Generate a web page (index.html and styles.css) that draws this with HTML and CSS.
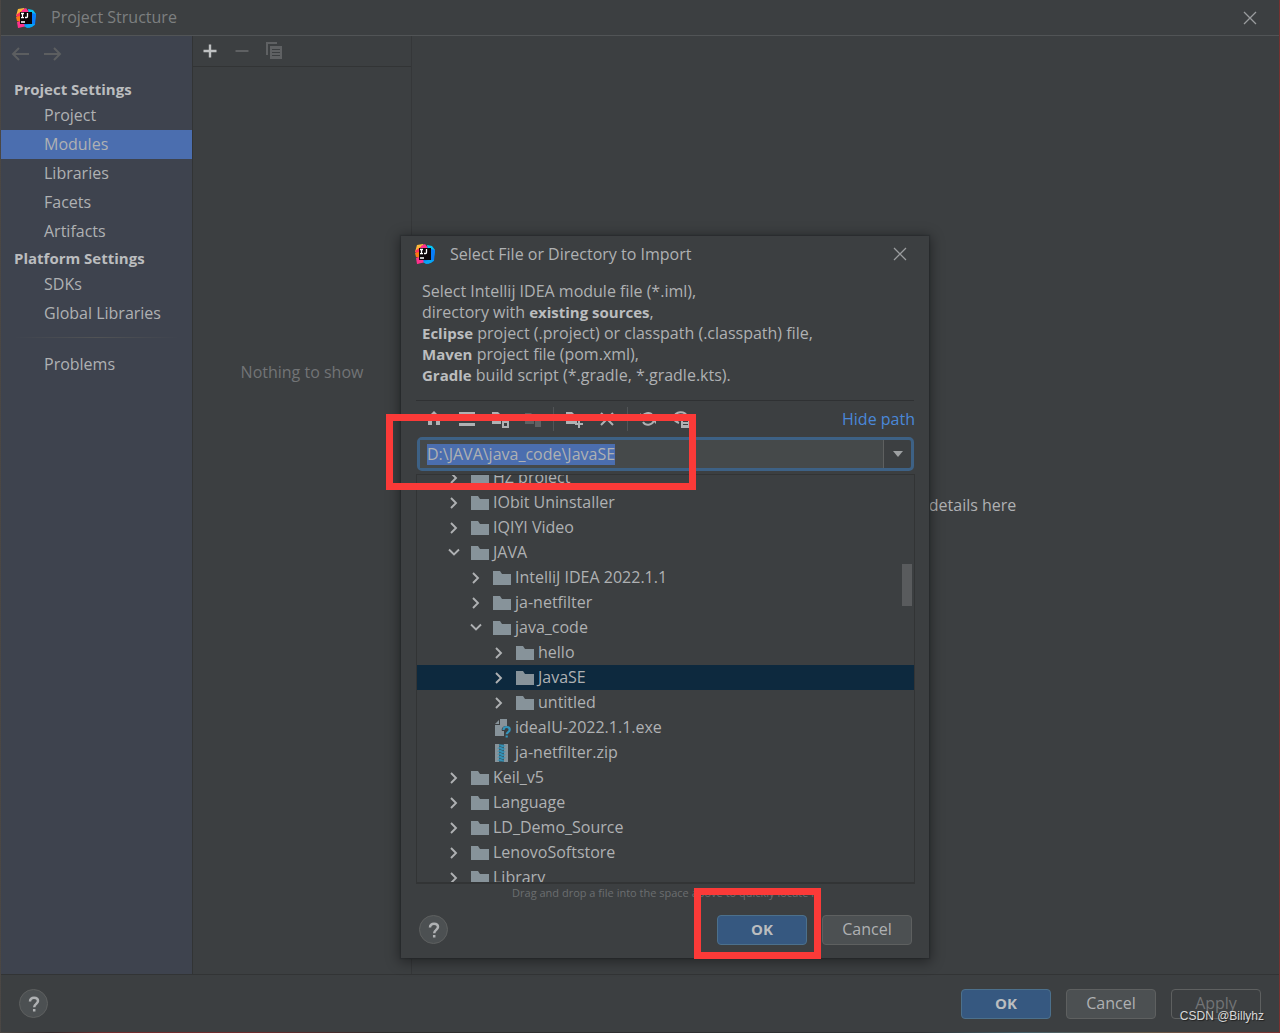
FILE: index.html
```html
<!DOCTYPE html>
<html lang="en">

<head>
    <meta charset="utf-8">
    <title>Project Structure</title>
    <link rel="stylesheet" href="styles.css">
</head>

<body>
    <!-- shared icons -->
    <svg class="sprite" aria-hidden="true">
        <symbol id="logo" viewBox="0 0 20 20">
            <path fill="#fcb93a" d="M2 1l6-1 3 4-5 6-6-2z" />
            <path fill="#fe315d" d="M0 7l7-5 5 3-3 12-7 3 1-7z" />
            <path fill="#f97a12" d="M0 9l4-1 1 6-4-1z" />
            <path fill="#ff318c" d="M6 2l4-2 3 4-7 2zM1 14l4-1 6 5-9 2z" />
            <path fill="#07c3f2" d="M12 1l5 1 3 4-1 6-6-6z" />
            <path fill="#087cfa" d="M16 5l4 1-1 11-6 3-5-3z" />
            <path fill="#07a7f2" d="M13 16l6 0-3 3-5 1-3-2z" />
            <path fill="#0b0508" d="M4 4h12v12H4z" />
            <path fill="none" stroke="#fff" stroke-width="1.3" d="M5 5.500h3M6.500 5.500v4M5 9.600h3M11.500 5v3.500q0 1-1 1H9M5 14h4" />
        </symbol>
        <symbol id="close" viewBox="0 0 14 14">
            <path fill="none" stroke="currentColor" stroke-width="1.300" d="M1 1l12 12M13 1L1 13" />
        </symbol>
        <symbol id="help" viewBox="0 0 14 18">
            <path fill="none" stroke="currentColor" stroke-width="2.500" d="M3 6.500C3 4 4.700 2.800 7 2.800s4 1.200 4 3.300C11 8.800 7.200 9 7.200 12.200M7.200 14v2.500" />
        </symbol>
        <symbol id="folder" viewBox="0 0 18 16">
            <path fill="#87939a" d="M0 1h7l2 3h9v11H0z" />
        </symbol>
        <symbol id="right" viewBox="0 0 16 16">
            <path fill="none" stroke="currentColor" stroke-width="1.900" d="M5 3l5 5-5 5" />
        </symbol>
        <symbol id="down" viewBox="0 0 16 16">
            <path fill="none" stroke="currentColor" stroke-width="1.900" d="M3 4.500l5 5 5-5" />
        </symbol>
        <symbol id="exe" viewBox="0 0 18 20">
            <path fill="#87939a" d="M7 1h7v7c-4 0-6 2-5 5h2v5H2V7h5z" />
            <path fill="#87939a" d="M2 6l4-4v4z" />
            <path fill="none" stroke="#3494ba" stroke-width="2.200" d="M10.500 12c0-2 1.500-3 3.200-3s3 1 3 2.700c0 2.300-3 2.300-3 4.500M13.700 17.500v2" />
        </symbol>
        <symbol id="zip" viewBox="0 0 18 20">
            <path fill="#87939a" d="M2 1h4v18H2zM11 1h4v18h-4z" />
            <path fill="none" stroke="#3494ba" stroke-width="1.200" d="M6 2l5 1-5 2 5 1-5 2 5 1-5 2 5 1-5 2 5 1-5 2 5 1" />
            <path fill="#3494ba" opacity=".4" d="M6 1h5v18H6z" />
        </symbol>
    </svg>

    <div class="window">
        <header class="titlebar">
            <svg class="logo"><use href="#logo" /></svg>
            <h1>Project Structure</h1>
            <button class="close" aria-label="Close"><svg><use href="#close" /></svg></button>
        </header>

        <div class="content">
            <nav class="sidebar">
                <div class="history">
                    <button aria-label="Back"><svg viewBox="0 0 18 14"><path d="M18 7H2M8 1L2 7l6 6" /></svg></button>
                    <button aria-label="Forward"><svg viewBox="0 0 18 14"><path d="M0 7h16M10 1l6 6-6 6" /></svg></button>
                </div>
                <h2>Project Settings</h2>
                <a href="#project">Project</a>
                <a href="#modules" class="active">Modules</a>
                <a href="#libraries">Libraries</a>
                <a href="#facets">Facets</a>
                <a href="#artifacts">Artifacts</a>
                <h2>Platform Settings</h2>
                <a href="#sdks">SDKs</a>
                <a href="#global">Global Libraries</a>
                <hr>
                <a href="#problems">Problems</a>
            </nav>

            <section class="modules">
                <div class="modules-tools">
                    <button aria-label="Add"><svg viewBox="0 0 18 18"><path fill="none" stroke="#bfc1c2" stroke-width="2.400" d="M9 2.500v13M2.500 9h13" /></svg></button>
                    <button aria-label="Remove" disabled><svg viewBox="0 0 18 18"><path fill="none" stroke="#5f6163" stroke-width="2" d="M2.500 9h13" /></svg></button>
                    <button aria-label="Copy" disabled><svg viewBox="0 0 18 18"><path fill="#5f6163" d="M1 0h11v2H3v11H1z" /><path fill="#5f6163" d="M5 4h12v13H5z" /><path stroke="#3c3f41" stroke-width="1.200" d="M7 7.500h8M7 10.500h8M7 13.500h8" /></svg></button>
                </div>
                <p class="empty">Nothing to show</p>
            </section>

            <main class="details">
                <p>Select a module to view or edit its details here</p>
            </main>
        </div>

        <footer class="buttons">
            <button class="help" aria-label="Help"><svg><use href="#help" /></svg></button>
            <button class="btn primary">OK</button>
            <button class="btn">Cancel</button>
            <button class="btn" disabled>Apply</button>
        </footer>
    </div>

    <section class="dialog" role="dialog" aria-labelledby="dialog-title">
        <header class="dialog-title">
            <svg class="logo"><use href="#logo" /></svg>
            <h2 id="dialog-title">Select File or Directory to Import</h2>
            <button class="close" aria-label="Close"><svg><use href="#close" /></svg></button>
        </header>

        <p class="description">
            Select Intellij IDEA module file (*.iml),<br>
            directory with <b>existing sources</b>,<br>
            <b>Eclipse</b> project (.project) or classpath (.classpath) file,<br>
            <b>Maven</b> project file (pom.xml),<br>
            <b>Gradle</b> build script (*.gradle, *.gradle.kts).
        </p>

        <div class="dialog-tools">
            <button aria-label="Home"><svg viewBox="0 0 20 20"><path d="M10 2l8 8h-2v6h-4v-5H8v5H4v-6H2z" /></svg></button>
            <button aria-label="Desktop"><svg viewBox="0 0 20 20"><path d="M2 3h16v3H2zM2 9h16v3H2zM2 14h16v3H2z" /></svg></button>
            <button aria-label="Project directory"><svg viewBox="0 0 20 20"><path d="M2 3h6l2 2h7v5h-6v5H2z" /><path d="M12 11h7v8h-7zm2 3v3h3v-3z" fill-rule="evenodd" /></svg></button>
            <button aria-label="Module directory" disabled><svg viewBox="0 0 20 20"><path d="M2 4h6l2 2h6v4h-5v5H2zM12 11h6v7h-6z" /></svg></button>
            <span class="divider"></span>
            <button aria-label="New folder"><svg viewBox="0 0 20 20"><path d="M2 3h6l2 2h7v5h-4v5H2z" /><path d="M14 11h2v3h3v2h-3v3h-2v-3h-3v-2h3z" /></svg></button>
            <button aria-label="Delete"><svg viewBox="0 0 20 20"><path class="line" d="M4 4l12 12M16 4L4 16" /></svg></button>
            <span class="divider"></span>
            <button aria-label="Refresh"><svg viewBox="0 0 20 20"><path class="line" d="M4 9a6 6 0 0 1 11-2M16 10a6 6 0 0 1-11 3" /><path d="M2 4v6h6zM18 15V9h-6z" /></svg></button>
            <button aria-label="Show hidden files"><svg viewBox="0 0 20 20"><path class="line" d="M8 14C5 13 3 11 2 9c3-7 11-8 15-1" /><path class="line" d="M8 11a2 2 0 0 1 3-4" /><path d="M10 9h9v10h-9zm2 3v1h5v-1zm0 3v1h5v-1z" fill-rule="evenodd" /></svg></button>
            <a href="#path">Hide path</a>
        </div>

        <div class="path-field">
            <input id="path" type="text" aria-label="Path" value="D:\JAVA\java_code\JavaSE" spellcheck="false">
            <button aria-label="Recent paths"><svg viewBox="0 0 12 8"><path fill="#9da0a2" d="M1 1h10L6 7z" /></svg></button>
        </div>

        <div class="tree">
            <ul>
                <li><svg class="arrow"><use href="#right" /></svg><svg class="folder"><use href="#folder" /></svg>HZ project</li>
                <li><svg class="arrow"><use href="#right" /></svg><svg class="folder"><use href="#folder" /></svg>IObit Uninstaller</li>
                <li><svg class="arrow"><use href="#right" /></svg><svg class="folder"><use href="#folder" /></svg>IQIYI Video</li>
                <li><svg class="arrow"><use href="#down" /></svg><svg class="folder"><use href="#folder" /></svg>JAVA</li>
                <li class="level2"><svg class="arrow"><use href="#right" /></svg><svg class="folder"><use href="#folder" /></svg>IntelliJ IDEA 2022.1.1</li>
                <li class="level2"><svg class="arrow"><use href="#right" /></svg><svg class="folder"><use href="#folder" /></svg>ja-netfilter</li>
                <li class="level2"><svg class="arrow"><use href="#down" /></svg><svg class="folder"><use href="#folder" /></svg>java_code</li>
                <li class="level3"><svg class="arrow"><use href="#right" /></svg><svg class="folder"><use href="#folder" /></svg>hello</li>
                <li class="level3 selected"><svg class="arrow"><use href="#right" /></svg><svg class="folder"><use href="#folder" /></svg>JavaSE</li>
                <li class="level3"><svg class="arrow"><use href="#right" /></svg><svg class="folder"><use href="#folder" /></svg>untitled</li>
                <li class="level2"><span class="arrow"></span><svg class="file"><use href="#exe" /></svg>ideaIU-2022.1.1.exe</li>
                <li class="level2"><span class="arrow"></span><svg class="file"><use href="#zip" /></svg>ja-netfilter.zip</li>
                <li><svg class="arrow"><use href="#right" /></svg><svg class="folder"><use href="#folder" /></svg>Keil_v5</li>
                <li><svg class="arrow"><use href="#right" /></svg><svg class="folder"><use href="#folder" /></svg>Language</li>
                <li><svg class="arrow"><use href="#right" /></svg><svg class="folder"><use href="#folder" /></svg>LD_Demo_Source</li>
                <li><svg class="arrow"><use href="#right" /></svg><svg class="folder"><use href="#folder" /></svg>LenovoSoftstore</li>
                <li><svg class="arrow"><use href="#right" /></svg><svg class="folder"><use href="#folder" /></svg>Library</li>
            </ul>
            <span class="scrollbar"></span>
        </div>
        <p class="hint">Drag and drop a file into the space above to quickly locate it</p>

        <footer class="buttons">
            <button class="help" aria-label="Help"><svg><use href="#help" /></svg></button>
            <button class="btn primary">OK</button>
            <button class="btn">Cancel</button>
        </footer>

        <span class="mark mark-path"></span>
        <span class="mark mark-ok"></span>
    </section>

    <span class="watermark">CSDN @Billyhz</span>

    <script>
        // the path is selected when the dialog opens
        let path = document.querySelector("#path");
        path.focus();
        path.select();
    </script>
</body>

</html>
```
FILE: styles.css
```css
* {
    box-sizing: border-box;
}

body {
    position: relative;
    margin: 0;
    min-height: 100vh;
    padding: 0 1px 1px;
    background: linear-gradient(to right, #4b4744, #33292b 4%, #722c2e 8%, #6b2b2d 20%, #2f2d2d 30%, #303234 72%, #46606a 80%, #6a5a48 90%, #7a2f2f);
    color: #afb1b3;
    font-family: "Open Sans", "Noto Sans", sans-serif;
    font-size: 16px;
    line-height: 21px;
    overflow: hidden;
}

h1,
h2,
p,
ul {
    margin: 0;
    padding: 0;
    font-size: 16px;
    font-weight: normal;
}

b {
    color: #bbbdbf;
    font-size: 15px;
}

button {
    padding: 0;
    border: 0;
    background: none;
    color: inherit;
    font: inherit;
}

svg {
    display: block;
}

.sprite {
    position: absolute;
    width: 0;
    height: 0;
}

.window {
    display: flex;
    flex-direction: column;
    height: calc(100vh - 1px);
    background: #3c3f41;
}

.logo {
    width: 20px;
    height: 20px;
}

.close {
    margin-left: auto;
    color: #9a9c9e;
}

.close svg {
    width: 14px;
    height: 14px;
}

.titlebar {
    display: flex;
    align-items: center;
    gap: 15px;
    height: 36px;
    padding: 0 22px 0 15px;
    border-bottom: 1px solid #515456;
}

.titlebar h1 {
    color: #7d7f80;
}

.content {
    display: flex;
    flex: 1;
    border-bottom: 1px solid #323435;
}

/* left navigation */
.sidebar {
    width: 192px;
    border-right: 1px solid #323435;
    background: #3e434e;
}

.history {
    display: flex;
    align-items: flex-start;
    gap: 15px;
    height: 41px;
    padding: 11px 10px 0;
}

.history svg {
    width: 18px;
    height: 14px;
    fill: none;
    stroke: #5c5e60;
    stroke-width: 2;
}

.sidebar h2 {
    padding-left: 13px;
    color: #bbbdbf;
    font-size: 15px;
    font-weight: bold;
    line-height: 24px;
}

.sidebar a {
    display: block;
    padding-left: 43px;
    color: inherit;
    line-height: 29px;
    text-decoration: none;
}

.sidebar .active {
    background: #4b6eaf;
}

.sidebar hr {
    height: 1px;
    margin: 9px 12px 12px;
    border: 0;
    background: linear-gradient(to right, transparent, #515355, transparent);
}

/* module list */
.modules {
    display: flex;
    flex-direction: column;
    align-items: center;
    width: 219px;
    border-right: 1px solid #353739;
}

.modules::before {
    content: "";
    flex: 1;
    order: 1;
}

.modules::after {
    content: "";
    flex: 2;
    order: 3;
}

.modules-tools {
    display: flex;
    align-self: stretch;
    align-items: center;
    gap: 14px;
    height: 31px;
    padding-left: 8px;
    border-bottom: 1px solid #323435;
}

.modules-tools svg {
    width: 18px;
    height: 18px;
}

.empty {
    order: 2;
    color: #727476;
}

.details {
    display: flex;
    flex: 1;
    align-items: center;
    justify-content: center;
}

/* buttons */
.buttons {
    display: flex;
    align-items: center;
    gap: 15px;
    height: 57px;
    padding: 0 18px;
}

.btn {
    width: 90px;
    height: 30px;
    border: 1px solid #5e6060;
    border-radius: 4px;
    background: #4c5052;
}

.btn.primary {
    border-color: #4c708c;
    background: #365880;
    color: #bbbdbf;
    font-size: 15px;
    font-weight: bold;
}

.btn:disabled {
    background: none;
    color: #727476;
}

.help {
    display: flex;
    align-items: center;
    justify-content: center;
    width: 29px;
    height: 29px;
    margin-right: auto;
    border: 1px solid #5e6060;
    border-radius: 50%;
    background: #4c5052;
}

.help svg {
    width: 14px;
    height: 18px;
}

/* import dialog */
.dialog {
    position: absolute;
    top: 236px;
    left: 401px;
    width: 528px;
    background: #3c3f41;
    box-shadow: 0 2px 12px 2px rgba(0, 0, 0, .4), 0 0 1px 1px #34373a;
}

.dialog-title {
    display: flex;
    align-items: center;
    gap: 15px;
    height: 36px;
    padding: 0 22px 0 14px;
}

.description {
    margin: 0 15px;
    padding: 9px 6px 14px;
    border-bottom: 1px solid #2f3133;
}

.dialog-tools {
    display: flex;
    align-items: center;
    gap: 13px;
    height: 36px;
    padding: 0 14px 0 23px;
}

.dialog-tools svg {
    width: 20px;
    height: 20px;
    fill: #afb1b3;
}

.dialog-tools .line {
    fill: none;
    stroke: #afb1b3;
    stroke-width: 2;
}

.dialog-tools button:disabled {
    opacity: .3;
}

.divider {
    width: 1px;
    height: 24px;
    margin: 0 -3px;
    background: #515456;
}

.dialog-tools a {
    margin-left: auto;
    color: #4a88d9;
    text-decoration: none;
}

.path-field {
    display: flex;
    height: 34px;
    margin: 0 15px 3px 16px;
    border: 3px solid #3d6185;
    border-radius: 5px;
}

.path-field input {
    flex: 1;
    min-width: 0;
    padding: 0 7px;
    border: 0;
    outline: 0;
    background: #45494a;
    color: #afb1b3;
    font: inherit;
}

.path-field input::selection {
    background: #4b6eaf;
    color: #afb1b3;
}

.path-field button {
    display: flex;
    align-items: center;
    justify-content: center;
    width: 28px;
    border-left: 1px solid #5e6060;
}

.path-field button svg {
    width: 12px;
    height: 8px;
}

.tree {
    position: relative;
    height: 410px;
    margin: 0 14px 0 15px;
    border: 1px solid #323435;
    border-bottom-width: 2px;
    overflow: hidden;
}

/* list is scrolled a little */
.tree ul {
    margin-top: -10px;
    list-style: none;
}

.tree li {
    display: flex;
    align-items: center;
    height: 25px;
    padding-left: 29px;
}

.tree .level2 {
    padding-left: 51px;
}

.tree .level3 {
    padding-left: 74px;
}

.tree .selected {
    background: #0d293e;
}

.arrow {
    width: 16px;
    height: 16px;
    margin-right: 9px;
}

.folder {
    width: 18px;
    height: 16px;
    margin-right: 4px;
}

.file {
    width: 18px;
    height: 20px;
    margin-right: 4px;
}

.scrollbar {
    position: absolute;
    top: 89px;
    right: 2px;
    width: 10px;
    height: 42px;
    background: #595b5d;
}

.hint {
    color: #6b6e70;
    font-size: 11px;
    line-height: 17px;
    text-align: center;
}

.dialog .buttons {
    padding-right: 17px;
}

/* red frames round the path and the OK button */
.mark {
    position: absolute;
    border: 7px solid #fb3a38;
    pointer-events: none;
}

.mark-path {
    top: 178px;
    left: -15px;
    width: 310px;
    height: 76px;
}

.mark-ok {
    right: 108px;
    bottom: -1px;
    width: 127px;
    height: 71px;
}

.watermark {
    position: absolute;
    right: 16px;
    bottom: 8px;
    color: #d8d8d8;
    font: 12px/18px "Liberation Sans", Arial, sans-serif;
    text-shadow: 1px 1px 1px #222;
}
```
